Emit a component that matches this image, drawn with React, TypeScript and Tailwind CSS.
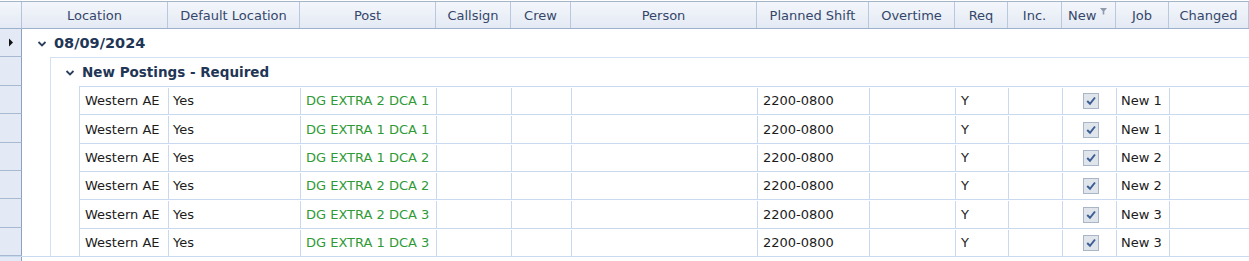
import React from "react";

const cols = [
  { name: "Location", w: 146 },
  { name: "Default Location", w: 132 },
  { name: "Post", w: 136 },
  { name: "Callsign", w: 75 },
  { name: "Crew", w: 60 },
  { name: "Person", w: 186 },
  { name: "Planned Shift", w: 112 },
  { name: "Overtime", w: 86 },
  { name: "Req", w: 53 },
  { name: "Inc.", w: 54 },
  { name: "New", w: 54 },
  { name: "Job", w: 53 },
  { name: "Changed", w: 80 },
];

const rows = [
  { post: "DG EXTRA 2 DCA 1", job: "New 1", h: 28 },
  { post: "DG EXTRA 1 DCA 1", job: "New 1", h: 29 },
  { post: "DG EXTRA 1 DCA 2", job: "New 2", h: 28 },
  { post: "DG EXTRA 2 DCA 2", job: "New 2", h: 28 },
  { post: "DG EXTRA 2 DCA 3", job: "New 3", h: 29 },
  { post: "DG EXTRA 1 DCA 3", job: "New 3", h: 28 },
];

const font = { fontFamily: '"DejaVu Sans", Tahoma, sans-serif' };

function Chevron() {
  return (
    <svg width="10" height="8" viewBox="0 0 10 8" className="shrink-0">
      <path d="M1.5 2 L5 5.5 L8.5 2" fill="none" stroke="#2b3f5c" strokeWidth="1.8" />
    </svg>
  );
}

function Check() {
  return (
    <div className="w-[16px] h-[16px] border border-[#a9b6c8] bg-[#e0e5ec] flex items-center justify-center">
      <svg width="12" height="12" viewBox="0 0 12 12">
        <path d="M2.2 6 L5 8.8 L10 2.5" fill="none" stroke="#3d5f96" strokeWidth="2" />
      </svg>
    </div>
  );
}

function Indicator({ h, arrow }: { h: number; arrow?: boolean }) {
  return (
    <div
      className="w-[22px] shrink-0 bg-[#e3eaf5] border-r border-b border-r-[#8ea2c0] border-b-[#a8b9d2] flex items-center justify-center"
      style={{ height: h }}
    >
      {arrow && (
        <svg width="6" height="9" viewBox="0 0 6 9">
          <path d="M1 0.5 L5 4.5 L1 8.5 Z" fill="#111" />
        </svg>
      )}
    </div>
  );
}

export default function App() {
  return (
    <div className="w-[1249px] h-[261px] bg-white overflow-hidden text-[13px] pt-px" style={font}>
      {/* header */}
      <div className="flex h-[28px] border-t border-b border-t-[#a7b4c6] border-b-[#9eb1cc] bg-gradient-to-b from-[#f3f6fb] to-[#e4eaf4]">
        <div className="w-[22px] shrink-0 border-r border-[#b5c4da]" />
        {cols.map((c) => (
          <div
            key={c.name}
            className={
              "shrink-0 border-r border-[#b9c8dd] flex items-center text-[#34466a] text-[13px] relative pt-px " +
              (c.name === "New" ? "justify-start pl-[6px]" : "justify-center")
            }
            style={{ width: c.w }}
          >
            {c.name}
            {c.name === "New" && (
              <svg width="7" height="7" viewBox="0 0 7 7" className="absolute right-[8px] top-[6px]">
                <path d="M0 0 H7 L4.3 3.2 V6.5 H2.7 V3.2 Z" fill="#8f9aab" />
              </svg>
            )}
          </div>
        ))}
      </div>

      {/* date group row */}
      <div className="flex">
        <Indicator h={28} arrow />
        <div className="flex-1 flex items-center pl-[15px] gap-[7px] font-bold text-[14.5px] text-[#1f3656] pt-px">
          <Chevron />
          <span>08/09/2024</span>
        </div>
      </div>

      {/* subgroup row */}
      <div className="flex">
        <Indicator h={29} />
        <div className="w-[28px] shrink-0" />
        <div className="flex-1 flex items-center pl-[14px] gap-[7px] font-bold text-[13.5px] text-[#1f3656] border-t border-l border-[#d3e0f2] pt-px">
          <Chevron />
          <span>New Postings - Required</span>
        </div>
      </div>

      {/* data rows */}
      {rows.map((r, i) => (
        <div className="flex" key={i}>
          <Indicator h={r.h} />
          <div className="w-[28px] shrink-0" />
          <div className="w-[29px] shrink-0 border-l border-[#d3e0f2]" />
          <div className="flex-1 flex border-t border-l border-[#c9d9ef] text-[#1c1c1c] pt-px">
            <div className="w-[89px] shrink-0 border-r border-[#c9d9ef] flex items-center pl-[5px]">Western AE</div>
            <div className="w-[132px] shrink-0 border-r border-[#c9d9ef] flex items-center pl-[4px]">Yes</div>
            <div className="w-[136px] shrink-0 border-r border-[#c9d9ef] flex items-center pl-[5px] text-[#2f9a36]">{r.post}</div>
            <div className="w-[75px] shrink-0 border-r border-[#c9d9ef]" />
            <div className="w-[60px] shrink-0 border-r border-[#c9d9ef]" />
            <div className="w-[186px] shrink-0 border-r border-[#c9d9ef]" />
            <div className="w-[112px] shrink-0 border-r border-[#c9d9ef] flex items-center pl-[5px]">2200-0800</div>
            <div className="w-[86px] shrink-0 border-r border-[#c9d9ef]" />
            <div className="w-[53px] shrink-0 border-r border-[#c9d9ef] flex items-center pl-[5px]">Y</div>
            <div className="w-[54px] shrink-0 border-r border-[#c9d9ef]" />
            <div className="w-[54px] shrink-0 border-r border-[#c9d9ef] flex items-center justify-center pl-[2px]">
              <Check />
            </div>
            <div className="w-[53px] shrink-0 border-r border-[#c9d9ef] flex items-center pl-[4px]">{r.job}</div>
            <div className="flex-1" />
          </div>
        </div>
      ))}

      {/* bottom */}
      <div className="flex border-t border-[#c9d9ef]">
        <Indicator h={8} />
        <div className="flex-1" />
      </div>
    </div>
  );
}
